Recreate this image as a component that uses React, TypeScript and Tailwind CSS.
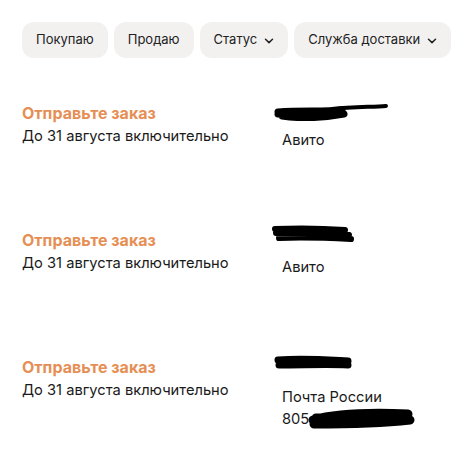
import React from "react";

function Chevron() {
  return (
    <svg width="10" height="6" viewBox="0 0 10 6" className="ml-[7px] mt-[1px]" fill="none">
      <path d="M1.5 1.2L5 4.6L8.5 1.2" stroke="#222" strokeWidth="1.5" strokeLinecap="round" strokeLinejoin="round" />
    </svg>
  );
}

function Chip({ label, chevron }: { label: string; chevron?: boolean }) {
  return (
    <div className="flex h-[36px] shrink-0 items-center rounded-[12px] bg-[#f2f1f0] px-[14px] text-[13px] text-[#222]">
      <span>{label}</span>
      {chevron && <Chevron />}
    </div>
  );
}

function Scribble({ kind }: { kind: number }) {
  if (kind === 1) {
    return (
      <svg width="120" height="22" viewBox="0 0 120 22" className="absolute left-[-10px] top-[-3px]">
        <path d="M6 13 C 30 11, 50 13, 70 11 M6 15 C 30 17, 50 17, 70 14 M10 17 C 30 20, 50 19, 72 15" stroke="#000" strokeWidth="7" strokeLinecap="round" fill="none" />
        <path d="M60 10 C 80 8, 100 8, 114 7" stroke="#000" strokeWidth="4" strokeLinecap="round" fill="none" />
      </svg>
    );
  }
  if (kind === 2) {
    return (
      <svg width="90" height="24" viewBox="0 0 90 24" className="absolute left-[-11px] top-[-6px]">
        <path d="M4 6 C 30 5, 60 6, 74 7 M5 10 C 30 10, 60 10, 78 12 M8 15 C 30 14, 60 15, 80 16" stroke="#000" strokeWidth="6" strokeLinecap="round" fill="none" />
      </svg>
    );
  }
  return (
    <svg width="90" height="22" viewBox="0 0 90 22" className="absolute left-[-8px] top-[-3px]">
      <path d="M4 7 C 30 5, 55 7, 74 8 M5 12 C 30 12, 55 11, 74 12" stroke="#000" strokeWidth="7" strokeLinecap="round" fill="none" />
    </svg>
  );
}

function Row({ kind, lines, tall }: { kind: number; lines: React.ReactNode[]; tall?: boolean }) {
  return (
    <div className="flex">
      <div className="w-[260px] shrink-0">
        <div className="text-[16px] font-bold leading-[22px] text-[#e68f55]">Отправьте заказ</div>
        <div className="text-[14.7px] leading-[24px] text-[#1a1a1a]">До 31 августа включительно</div>
      </div>
      <div className="flex flex-col">
        <div className="relative h-[22px]">
          <Scribble kind={kind} />
        </div>
        <div
          className={
            tall
              ? "mt-[8px] text-[14.7px] leading-[22px] text-[#1a1a1a]"
              : "mt-[6px] text-[14.7px] leading-[21px] text-[#1a1a1a]"
          }
        >
          {lines.map((l, i) => (
            <div key={i}>{l}</div>
          ))}
        </div>
      </div>
    </div>
  );
}

export default function App() {
  return (
    <div
      className="min-h-[452px] w-[451px] overflow-hidden bg-white pl-[22px] pt-[22px]"
      style={{ fontFamily: "Inter, 'Noto Sans', sans-serif" }}
    >
      <div className="flex gap-[6px]">
        <Chip label="Покупаю" />
        <Chip label="Продаю" />
        <Chip label="Статус" chevron />
        <Chip label="Служба доставки" chevron />
      </div>
      <div className="mt-[44px] flex flex-col gap-[78px]">
        <Row kind={1} lines={["Авито"]} />
        <Row kind={2} lines={["Авито"]} />
        <Row
          kind={3}
          tall
          lines={[
            "Почта России",
            <div className="relative flex items-center">
              <span>805</span>
              <svg width="116" height="28" viewBox="0 0 116 28" className="absolute left-[22px] top-[-4px]">
                <path d="M9 16 C 30 10, 60 8, 104 10 M10 20 C 40 20, 70 20, 106 16 M12 14 C 40 14, 80 14, 104 14" stroke="#000" strokeWidth="9" strokeLinecap="round" fill="none" />
              </svg>
            </div>,
          ]}
        />
      </div>
    </div>
  );
}
